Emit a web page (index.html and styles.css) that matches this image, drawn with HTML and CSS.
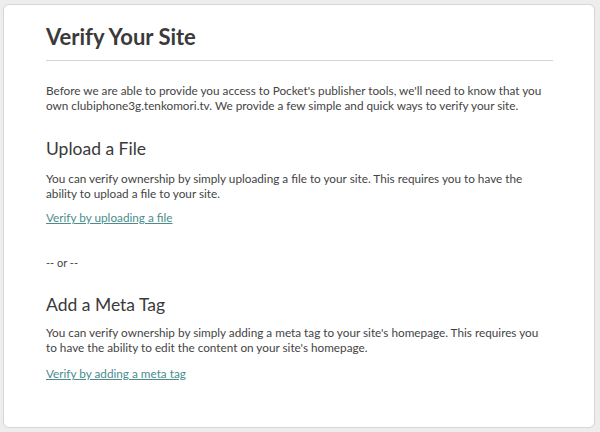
FILE: index.html
```html
<!DOCTYPE html>
<html>
  <head>
    <meta charset="utf-8">
    <title>Verify Your Site</title>
    <meta name="viewport" content="width=device-width, initial-scale=1">
    <link rel="stylesheet" href="styles.css">
  </head>
  <body>
    <div class="panel">
      <h1>Verify Your Site</h1>
      <p class="intro">
        Before we are able to provide you access to Pocket's publisher tools, we'll need to know that you<br>
        own clubiphone3g.tenkomori.tv. We provide a few simple and quick ways to verify your site.
      </p>

      <!-- Option 1 -->
      <h2>Upload a File</h2>
      <p>
        You can verify ownership by simply uploading a file to your site. This requires you to have the<br>
        ability to upload a file to your site.
      </p>
      <p><a href="#">Verify by uploading a file</a></p>

      <p class="or">-- or --</p>

      <!-- Option 2 -->
      <h2>Add a Meta Tag</h2>
      <p>
        You can verify ownership by simply adding a meta tag to your site's homepage. This requires you<br>
        to have the ability to edit the content on your site's homepage.
      </p>
      <p class="last"><a href="#">Verify by adding a meta tag</a></p>
    </div>
  </body>
</html>
```

FILE: styles.css
```css
html,
body {
  height: 100%;
}

body {
  margin: 0;
  padding: 4px 5px 4px 3px;
  box-sizing: border-box;
  background: #ededed;
  font-family: Lato, "Liberation Sans", Arial, sans-serif;
  color: #444;
}

.panel {
  height: 100%;
  box-sizing: border-box;
  background: #fff;
  border: 1px solid #d6d6d6;
  border-radius: 6px;
  padding: 18px 42px 0 42px;
}

h1 {
  margin: 0 -1px 0 0;
  padding-bottom: 10px;
  border-bottom: 1px solid #d4d4d4;
  font-size: 22px;
  font-weight: bold;
  color: #3a3a3a;
}

p {
  margin: 0;
  font-size: 11.75px;
  line-height: 15px;
  white-space: nowrap;
}

.intro {
  margin-top: 22px;
}

h2 {
  margin: 25px 0 12px 0;
  font-size: 17.5px;
  font-weight: normal;
  color: #3a3a3a;
}

p a {
  display: inline-block;
  margin-top: 9px;
  color: #4a8d8c;
}

.last a {
  margin-top: 11px;
}

.or {
  margin-top: 30px;
  font-size: 11px;
}

.or + h2 {
  margin-top: 24px;
  margin-bottom: 10px;
}
```
